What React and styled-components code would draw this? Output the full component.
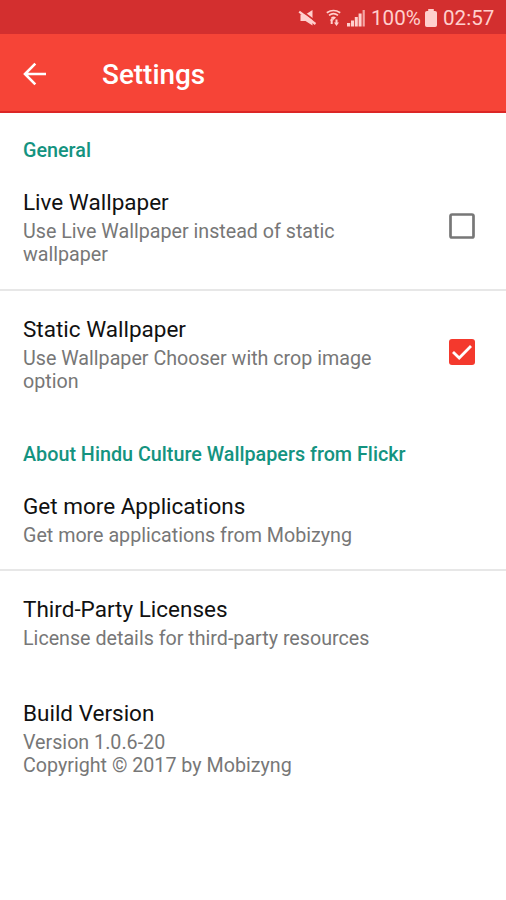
import React from 'react';
import styled, { createGlobalStyle } from 'styled-components';

const GlobalStyle = createGlobalStyle`
  * { box-sizing: border-box; }
  body { margin: 0; background: #fff; font-family: Roboto, sans-serif; }
`;

const Screen = styled.main`
  width: 506px;
  height: 900px;
  overflow: hidden;
  background: #fff;
`;

const StatusBar = styled.div`
  display: flex;
  align-items: center;
  height: 34px;
  padding: 2px 6px 0 298px;
  background: #d32f2f;
  color: #ffcfcd;
  font-size: 20.6px;
  line-height: 24px;
  white-space: nowrap;
  svg { display: block; flex: none; }
`;

const StatusText = styled.span`
  width: ${(p) => p.$width}px;
  margin-left: ${(p) => p.$gap}px;
`;

const StatusIcon = styled.svg`
  margin-left: ${(p) => p.$gap || 0}px;
`;

const AppBar = styled.header`
  display: flex;
  align-items: center;
  height: 79px;
  padding-left: 18px;
  background: #f64437;
  border-bottom: 2px solid #dc2626;
  color: #fff;
`;

const BackButton = styled.button`
  display: flex;
  width: 34px;
  height: 34px;
  margin-top: 2px;
  padding: 0;
  border: 0;
  background: none;
  color: inherit;
`;

const Title = styled.h1`
  margin: 4px 0 0 50px;
  font-size: 27.9px;
  line-height: 34px;
  font-weight: 500;
`;

const Category = styled.h2`
  height: ${(p) => p.$height}px;
  margin: 0;
  padding: ${(p) => p.$top}px 23px 0;
  color: #149380;
  font-size: 19.75px;
  line-height: 23px;
  font-weight: 500;
`;

const Row = styled.div`
  display: flex;
  justify-content: space-between;
  height: ${(p) => p.$height}px;
  padding: 0 31px 0 23px;
`;

const RowText = styled.div`
  width: ${(p) => (p.$narrow ? '372px' : 'auto')};
`;

const RowTitle = styled.div`
  color: #111;
  font-size: 22.5px;
  line-height: 27px;
`;

const Summary = styled.div`
  margin-top: 4px;
  color: #777;
  font-size: 19.68px;
  line-height: 23px;
  white-space: pre-line;
`;

const Divider = styled.hr`
  height: 2px;
  margin: 0 0 25px;
  border: 0;
  background: #e7e7e7;
`;

const Checkbox = styled.svg`
  display: block;
  flex: none;
  margin-top: ${(p) => p.$top}px;
`;

function CheckboxMark({ checked, label }) {
  return (
    <Checkbox
      $top={checked ? 23 : 24}
      width="26"
      height="26"
      viewBox="0 0 26 26"
      fill="none"
      role="checkbox"
      aria-checked={checked}
      aria-label={label}
    >
      {checked ? (
        <>
          <rect width="26" height="26" rx="3" fill="#f4392d" />
          <path d="M4 13l6.2 6L22 7" stroke="#fff" strokeWidth="2.8" />
        </>
      ) : (
        <rect x="1.5" y="1.5" width="23" height="23" rx="1.6" stroke="#777" strokeWidth="2.7" />
      )}
    </Checkbox>
  );
}

function Preference({ title, summary, height, checked }) {
  const hasBox = checked !== undefined;
  return (
    <Row $height={height}>
      <RowText $narrow={hasBox}>
        <RowTitle>{title}</RowTitle>
        <Summary>{summary}</Summary>
      </RowText>
      {hasBox && <CheckboxMark checked={checked} label={title} />}
    </Row>
  );
}

export default function App() {
  return (
    <>
      <GlobalStyle />
      <Screen>
        <StatusBar>
          <StatusIcon width="19" height="18" viewBox="0 0 19 18" fill="currentColor">
            <path d="M2.5 5.5h5L14.5 1v15.5L7.5 12h-5z" />
            <path d="M2.5 1L18.5 13" stroke="#d32f2f" strokeWidth="1.6" />
            <path d="M1.2 2.7l16.3 12.3" stroke="currentColor" strokeWidth="2.2" />
          </StatusIcon>
          <StatusIcon $gap={9} width="15" height="18" viewBox="0 0 15 18" fill="none" stroke="currentColor" strokeWidth="1.7">
            <path d="M.8 3.8Q7.5-.8 14.2 3.8M3 6.4q4.5-3.4 9 0" />
            <path d="M5 8.4q2.5-2 5 0L7.5 11z" fill="currentColor" stroke="none" />
            <path d="M3.8 11.5h3.8L5.7 9zM8 13.5h5L10.5 17z" fill="currentColor" stroke="none" />
            <path d="M5.7 11v4M10.5 10.5v4" strokeWidth="2" />
          </StatusIcon>
          <StatusIcon $gap={6} width="19" height="18" viewBox="0 0 19 18" fill="currentColor">
            <path d="M0 14h3.2v3.5H0zM4 11.5h3v6H4zM7.8 8h3v9.5h-3zM11.6 4.5h3v13h-3z" />
            <path d="M15.6 1h2.2v16.5h-2.2z" opacity=".75" />
          </StatusIcon>
          <StatusText $gap={5} $width={50}>100%</StatusText>
          <StatusIcon $gap={4} width="12" height="18" viewBox="0 0 12 18" fill="currentColor">
            <path d="M3.2 0h5.6v2H10q2 0 2 1.8v12.4q0 1.8-1.8 1.8H1.8Q0 18 0 16.2V3.8Q0 2 2 2h1.2z" />
          </StatusIcon>
          <StatusText $gap={6} $width={54}>02:57</StatusText>
        </StatusBar>
        <AppBar>
          <BackButton aria-label="Back">
            <svg width="34" height="34" viewBox="0 0 34 34" fill="none" stroke="currentColor" strokeWidth="2.6">
              <path d="M17.3 6.7L7 17l10.3 10.3M7 17h21" />
            </svg>
          </BackButton>
          <Title>Settings</Title>
        </AppBar>
        <Category $top={26} $height={76}>General</Category>
        <Preference title="Live Wallpaper" summary="Use Live Wallpaper instead of static wallpaper" height={100} checked={false} />
        <Divider />
        <Preference title="Static Wallpaper" summary="Use Wallpaper Chooser with crop image option" height={100} checked />
        <Category $top={27} $height={77}>About Hindu Culture Wallpapers from Flickr</Category>
        <Preference title="Get more Applications" summary="Get more applications from Mobizyng" height={76} />
        <Divider />
        <Preference title="Third-Party Licenses" summary="License details for third-party resources" height={104} />
        <Preference title="Build Version" summary={'Version 1.0.6-20\nCopyright © 2017 by Mobizyng'} height={100} />
      </Screen>
    </>
  );
}
